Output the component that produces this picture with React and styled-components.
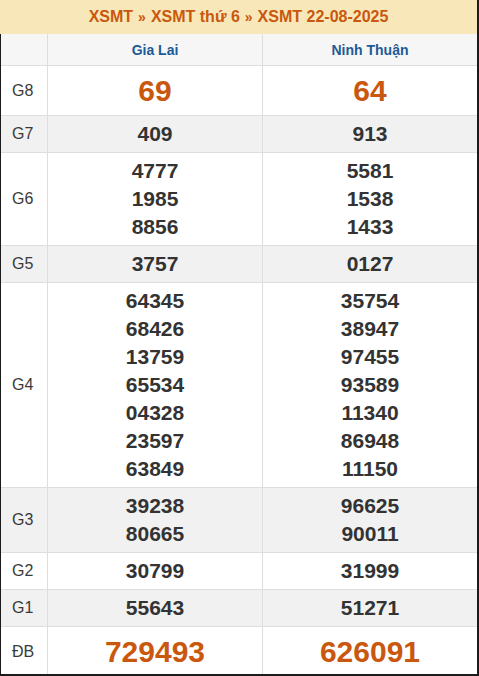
import React from 'react';
import styled, { createGlobalStyle } from 'styled-components';

const GlobalStyle = createGlobalStyle`
    html, body {
        margin: 0;
        padding: 0;
        background: #fff;
        font-family: "Liberation Sans", Arial, sans-serif;
    }
`;

const Wrapper = styled.div`
    width: 479px;
    height: 676px;
    box-sizing: border-box;
    border-right: 2px solid #1b1b1b;
    border-bottom: 2px solid #1b1b1b;
    overflow: hidden;
`;

const Title = styled.div`
    height: 34px;
    background: #f8e8b9;
    color: #c9580e;
    font-weight: bold;
    font-size: 16px;
    display: flex;
    align-items: center;
    justify-content: center;
    gap: 5px;
`;

const Sep = styled.span`
    font-size: 14px;
`;

const Table = styled.div`
    border-left: 1px solid #1b1b1b;
    display: grid;
    grid-template-columns: 46px 1fr 1fr;
`;

const Cell = styled.div`
    box-sizing: border-box;
    border-bottom: 1px solid #dedede;
    border-left: ${props => props.first ? 'none' : '1px solid #dedede'};
    background: ${props => props.shade ? '#f1f1f1' : '#fff'};
    display: flex;
    flex-direction: column;
    align-items: center;
    justify-content: center;
    padding: 4px 0;
`;

const HeadCell = styled(Cell)`
    height: 32px;
    background: #f6f6f6;
    color: #1d5a96;
    font-weight: bold;
    font-size: 14px;
`;

const Label = styled(Cell)`
    color: #3a3a3a;
    font-size: 16px;
    align-items: flex-start;
    padding-left: 11px;
`;

const Num = styled.div`
    line-height: ${props => props.big ? '41px' : '28px'};
    font-size: ${props => props.big ? '30px' : '21px'};
    font-weight: bold;
    color: ${props => props.big ? '#c9580e' : '#333'};
`;

const rows = [
    { g: 'G8', a: ['69'], b: ['64'], big: true },
    { g: 'G7', a: ['409'], b: ['913'], shade: true },
    { g: 'G6', a: ['4777', '1985', '8856'], b: ['5581', '1538', '1433'] },
    { g: 'G5', a: ['3757'], b: ['0127'], shade: true },
    { g: 'G4', a: ['64345', '68426', '13759', '65534', '04328', '23597', '63849'], b: ['35754', '38947', '97455', '93589', '11340', '86948', '11150'] },
    { g: 'G3', a: ['39238', '80665'], b: ['96625', '90011'], shade: true },
    { g: 'G2', a: ['30799'], b: ['31999'] },
    { g: 'G1', a: ['55643'], b: ['51271'], shade: true },
    { g: 'ĐB', a: ['729493'], b: ['626091'], big: true },
];

export default function App() {
    return (
        <Wrapper>
            <GlobalStyle />
            <Title>
                <span>XSMT</span><Sep>»</Sep><span>XSMT thứ 6</span><Sep>»</Sep><span>XSMT 22-08-2025</span>
            </Title>
            <Table>
                <HeadCell first />
                <HeadCell>Gia Lai</HeadCell>
                <HeadCell>Ninh Thuận</HeadCell>
                {rows.map(r => (
                    <React.Fragment key={r.g}>
                        <Label first shade={r.shade}>{r.g}</Label>
                        <Cell shade={r.shade}>
                            {r.a.map((n, i) => <Num key={i} big={r.big}>{n}</Num>)}
                        </Cell>
                        <Cell shade={r.shade}>
                            {r.b.map((n, i) => <Num key={i} big={r.big}>{n}</Num>)}
                        </Cell>
                    </React.Fragment>
                ))}
            </Table>
        </Wrapper>
    );
}
